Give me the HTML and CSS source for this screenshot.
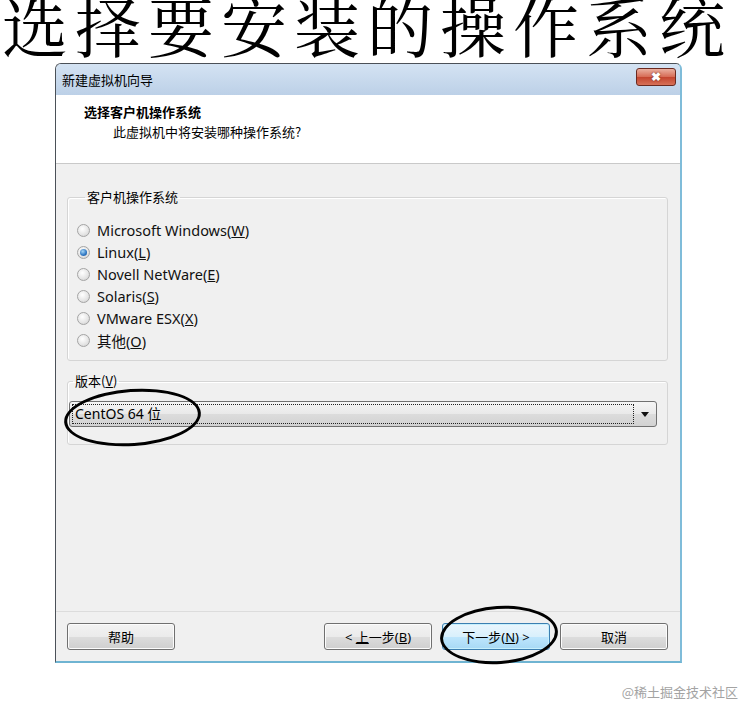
FILE: index.html
```html
<!DOCTYPE html>
<html lang="zh-CN">
<head>
  <meta charset="UTF-8" />
  <title>选择要安装的操作系统</title>
  <link rel="stylesheet" href="styles.css">
</head>
<body>
  <h1 class="slide-title">选择要安装的操作系统</h1>

  <div class="dialog">
    <div class="titlebar">
      <span>新建虚拟机向导</span>
      <button class="close-btn">&#x2716;</button>
    </div>

    <div class="header">
      <div class="header-title">选择客户机操作系统</div>
      <div class="header-sub">此虚拟机中将安装哪种操作系统?</div>
    </div>

    <div class="content">
      <fieldset class="group os-group">
        <legend>客户机操作系统</legend>
        <label class="radio"><span class="dot"></span><span>Microsoft Windows(<u>W</u>)</span></label>
        <label class="radio checked"><span class="dot"></span><span>Linux(<u>L</u>)</span></label>
        <label class="radio"><span class="dot"></span><span>Novell NetWare(<u>E</u>)</span></label>
        <label class="radio"><span class="dot"></span><span>Solaris(<u>S</u>)</span></label>
        <label class="radio"><span class="dot"></span><span>VMware ESX(<u>X</u>)</span></label>
        <label class="radio"><span class="dot"></span><span>其他(<u>O</u>)</span></label>
      </fieldset>

      <fieldset class="group version-group">
        <legend>版本(<u>V</u>)</legend>
        <div class="combo">
          <div class="combo-value"><span>CentOS 64 位</span></div>
          <div class="combo-arrow"></div>
        </div>
      </fieldset>
    </div>

    <div class="footer">
      <button class="btn">帮助</button>
      <button class="btn btn-back">&lt; <u>上</u>一步(<u>B</u>)</button>
      <button class="btn btn-focus">下一步(<u>N</u>) &gt;</button>
      <button class="btn">取消</button>
    </div>

    <div class="mark mark-combo"></div>
    <div class="mark mark-next"></div>
  </div>

  <div class="watermark">@稀土掘金技术社区</div>
</body>
</html>
```

FILE: styles.css
```css
:root {
  --face: #f0f0f0;
  --group-line: #d5d5d5;
  --btn-border: #707070;
  --frame: #4b5158;
}

* { box-sizing: border-box; }

body {
  margin: 0;
  background: #fff;
  color: #000;
  font-family: "Noto Sans", "Noto Sans CJK SC", sans-serif;
  font-size: 13px;
}

.slide-title {
  margin: 0;
  height: 63px;
  padding-left: 2px;
  font-family: "Noto Serif CJK SC", "Noto Sans CJK SC", serif;
  font-weight: 400;
  font-size: 66px;
  line-height: 48px;
  letter-spacing: 7px;
  white-space: nowrap;
  overflow: visible;
}

.dialog {
  position: relative;
  margin-left: 55px;
  width: 627px;
  height: 600px;
  display: flex;
  flex-direction: column;
  border: 1px solid var(--frame);
  border-right: 2px solid #7fbcd9;
  border-bottom: 2px solid #6fb4d2;
  border-radius: 6px 6px 0 0;
  background: var(--face);
}

.titlebar {
  height: 31px;
  display: flex;
  align-items: center;
  justify-content: space-between;
  padding: 0 4px 0 6px;
  background: linear-gradient(#d4e3f3, #bcd0e7);
  border-radius: 5px 5px 0 0;
  font-family: "Noto Sans CJK SC", sans-serif;
}

.close-btn {
  width: 40px;
  height: 18px;
  margin-top: -6px;
  padding: 0;
  border: 1px solid #6b2a20;
  border-radius: 3px;
  background: linear-gradient(#eab0a0, #d66a54 50%, #c3442e 51%, #d77158);
  color: #fff;
  font-size: 12px;
  font-weight: 700;
  line-height: 16px;
  text-shadow: 0 0 2px #6b2a20;
}

.header {
  height: 69px;
  padding: 7px 0 0 28px;
  background: #fff;
  border-bottom: 1px solid #c9c9c9;
  font-family: "Noto Sans CJK SC", sans-serif;
  line-height: 20px;
}

.header-title { font-weight: 700; }

.header-sub { padding-left: 29px; }

.content {
  flex: 1;
  padding: 23px 12px 0 11px;
}

.group {
  margin: 0;
  border: 1px solid var(--group-line);
  border-radius: 3px;
  box-shadow: inset 1px 1px 0 #fff;
}

.group legend {
  padding: 0 2px;
  font-family: "Noto Sans CJK SC", sans-serif;
  line-height: 20px;
}

.os-group {
  padding: 12px 0 9px 9px;
}

.os-group legend { margin-left: 8px; }

.radio {
  display: flex;
  align-items: center;
  gap: 7px;
  height: 22px;
  font-size: 14.5px;
  color: #111;
}

.dot {
  width: 13px;
  height: 13px;
  border-radius: 50%;
  border: 1px solid #a4a4a4;
  background: radial-gradient(circle at 40% 35%, #fff, #e4e4e4 60%, #c9c9c9);
  position: relative;
}

.radio.checked .dot::after {
  content: "";
  position: absolute;
  left: 2px;
  top: 2px;
  width: 7px;
  height: 7px;
  border-radius: 50%;
  background: radial-gradient(circle at 40% 35%, #a5d6f6, #2b74c2 60%, #174a8a);
}

.version-group {
  margin-top: 10px;
  padding: 10px 10px 17px 1px;
}

.version-group legend { margin-left: 4px; }

.combo {
  height: 26px;
  display: flex;
  align-items: center;
  border: 1px solid var(--btn-border);
  border-radius: 3px;
  background: linear-gradient(#f5f5f5, #e9e9e9 50%, #dcdcdc 51%, #d2d2d2);
}

.combo-value {
  flex: 1;
  height: 20px;
  margin-left: 2px;
  padding-left: 2px;
  border: 1px dotted #222;
  line-height: 18px;
  font-size: 14px;
}

.combo-arrow {
  width: 22px;
  height: 20px;
  position: relative;
}

.combo-arrow::after {
  content: "";
  position: absolute;
  left: 7px;
  top: 8px;
  border-left: 4px solid transparent;
  border-right: 4px solid transparent;
  border-top: 5px solid #111;
}

.footer {
  height: 50px;
  display: flex;
  align-items: flex-start;
  gap: 10px;
  padding: 11px 12px 0 11px;
  border-top: 1px solid #dcdcdc;
}

.btn {
  width: 108px;
  height: 27px;
  padding: 0;
  border: 1px solid var(--btn-border);
  border-radius: 3px;
  background: linear-gradient(#f3f3f3, #ebebeb 50%, #dddddd 51%, #cfcfcf);
  box-shadow: inset 0 0 0 1px #fcfcfc;
  font-family: "Noto Sans", "Noto Sans CJK SC", sans-serif;
  font-size: 13px;
  color: #000;
}

.btn-back { margin-left: auto; }

.btn-focus {
  border-color: #3c7fb1;
  background: linear-gradient(#eaf6fd, #d9f0fc 50%, #bee6fd 51%, #a7d9f5);
  box-shadow: inset 0 0 0 1px #c7f0fd;
}

.mark {
  position: absolute;
  border: 3px solid #000;
  border-radius: 50%;
}

.mark-combo {
  left: 8px;
  top: 325px;
  width: 137px;
  height: 57px;
  transform: rotate(-4deg);
}

.mark-next {
  left: 384px;
  top: 542px;
  width: 118px;
  height: 58px;
  transform: rotate(-4deg);
}

.watermark {
  margin-top: 19px;
  padding-right: 5px;
  text-align: right;
  font-family: "Noto Sans CJK SC", sans-serif;
  font-size: 13px;
  line-height: 20px;
  color: #a3a3a3;
}
```
